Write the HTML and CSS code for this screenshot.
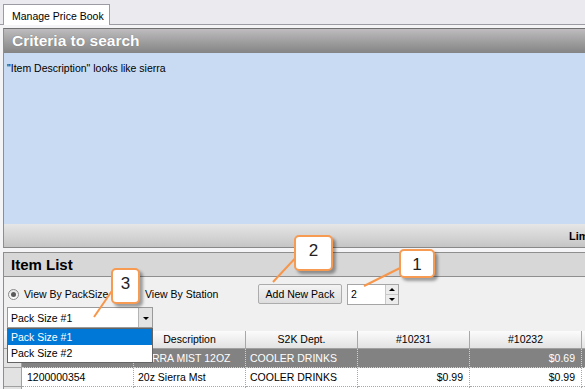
FILE: index.html
```html
<!DOCTYPE html>
<html lang="en">
    <head>
        <meta charset="UTF-8">
        <title>Manage Price Book</title>
        <link rel="stylesheet" href="styles.css">
    </head>
    <body>
        <div class="tabs">
            <div class="tab">Manage Price Book</div>
        </div>
        <div class="page">
            <div class="criteria">
                <div class="criteria_head">Criteria to search</div>
                <div class="criteria_body">"Item Description" looks like sierra</div>
                <div class="criteria_foot">Lim</div>
            </div>

            <div class="items">
                <div class="items_head">Item List</div>
                <div class="items_body">
                    <div class="options">
                        <label class="radio r1"><span class="dot on"></span>View By PackSize</label>
                        <label class="radio r2"><span class="dot"></span>View By Station</label>
                        <button class="btn_add">Add New Pack</button>
                        <div class="spin">
                            <span class="spin_val">2</span>
                            <div class="spin_btns">
                                <span class="spin_up"></span>
                                <span class="spin_down"></span>
                            </div>
                        </div>
                    </div>

                    <div class="combo">
                        <span class="combo_val">Pack Size #1</span>
                        <span class="combo_btn"><i class="arrow"></i></span>
                    </div>

                    <div class="grid">
                        <div class="hd rh"></div>
                        <div class="hd"></div>
                        <div class="hd">Description</div>
                        <div class="hd">S2K Dept.</div>
                        <div class="hd">#10231</div>
                        <div class="hd">#10232</div>
                        <div class="hd last"></div>

                        <div class="rh"></div>
                        <div class="cell dark"></div>
                        <div class="cell dark desc">SIERRA MIST 12OZ</div>
                        <div class="cell dark">COOLER DRINKS</div>
                        <div class="cell dark num"></div>
                        <div class="cell dark num">$0.69</div>
                        <div class="cell dark last"></div>

                        <div class="rh"></div>
                        <div class="cell upc">1200000354</div>
                        <div class="cell">20z Sierra Mst</div>
                        <div class="cell">COOLER DRINKS</div>
                        <div class="cell num">$0.99</div>
                        <div class="cell num">$0.99</div>
                        <div class="cell last"></div>

                        <div class="rh"></div>
                        <div class="cell"></div>
                        <div class="cell"></div>
                        <div class="cell"></div>
                        <div class="cell"></div>
                        <div class="cell"></div>
                        <div class="cell last"></div>
                    </div>
                </div>
            </div>
        </div>

        <!-- open dropdown list -->
        <div class="popup">
            <div class="popup_item selected">Pack Size #1</div>
            <div class="popup_item">Pack Size #2</div>
        </div>

        <!-- numbered callouts -->
        <svg class="lines" width="585" height="389" viewBox="0 0 585 389">
            <line x1="116" y1="285" x2="94" y2="317"></line>
            <line x1="300" y1="253" x2="273" y2="282"></line>
            <line x1="404" y1="266" x2="364" y2="286"></line>
        </svg>
        <div class="callout c3">3</div>
        <div class="callout c2">2</div>
        <div class="callout c1">1</div>
    </body>
</html>
```

FILE: styles.css
```css
* {
    margin: 0;
    padding: 0;
    box-sizing: border-box;
}

body {
    width: 585px;
    height: 389px;
    overflow: hidden;
    position: relative;
    background-color: #EBEBEF;
    font-family: "Liberation Sans", Arial, sans-serif;
    font-size: 10.5px;
    color: #000;
}

.tabs {
    height: 25px;
    padding: 4px 0 0 3px;
    border-bottom: 1px solid #9B9BA3;
}

.tab {
    width: 107px;
    height: 21px;
    background-color: white;
    border: 1px solid #9B9BA3;
    border-bottom: none;
    padding: 5px 0 0 8px;
    white-space: nowrap;
}

.page {
    background-color: #F4F4F6;
    padding-top: 3px;
    height: 364px;
}

.criteria {
    margin-left: 3px;
    border-left: 1px solid #8E8E8E;
    border-top: 1px solid #707070;
    border-bottom: 1px solid #888888;
}

.criteria_head {
    height: 24px;
    background: linear-gradient(#BEBCBE, #848484);
    color: white;
    font-weight: bold;
    font-size: 15.5px;
    padding: 3px 0 0 8px;
    text-shadow: 0 0 1px #6A6A70;
}

.criteria_body {
    height: 171px;
    background-color: #C9DBF2;
    padding: 9px 0 0 3px;
}

.criteria_foot {
    height: 23px;
    background: linear-gradient(#E6E6E6, #C5C5C5);
    font-weight: bold;
    font-size: 11px;
    padding: 6px 0 0 565px;
    white-space: nowrap;
    overflow: hidden;
}

.items {
    margin: 4px 0 0 3px;
    border-top: 1px solid #8E8E8E;
    border-left: 1px solid #8E8E8E;
}

.items_head {
    height: 24px;
    background-color: #D7D7D7;
    border-bottom: 1px solid #8E8E8E;
    font-weight: bold;
    font-size: 15px;
    padding: 3px 0 0 7px;
}

.items_body {
    background-color: #F0F0F0;
    height: 120px;
    padding-top: 7px;
}

.options {
    display: flex;
    align-items: center;
    height: 20px;
    padding-left: 4px;
}

.radio {
    display: flex;
    align-items: center;
    gap: 5px;
    white-space: nowrap;
}

.r1 {
    width: 121px;
}

.r2 {
    width: 129px;
}

.dot {
    width: 11px;
    height: 11px;
    border: 1px solid #8A8A8A;
    border-radius: 50%;
    background: linear-gradient(#E4E4E4, #FFFFFF);
    display: flex;
    align-items: center;
    justify-content: center;
}

.dot.on::after {
    content: "";
    width: 5px;
    height: 5px;
    border-radius: 50%;
    background-color: #5A5A5A;
}

.btn_add {
    width: 84px;
    height: 20px;
    font-family: inherit;
    font-size: 10.5px;
    background: linear-gradient(#F4F4F4, #DDDDDD);
    border: 1px solid #ACACAC;
    border-radius: 2px;
    margin-right: 5px;
}

.spin {
    display: flex;
    width: 52px;
    height: 21px;
    background-color: white;
    border: 1px solid #A5A5A5;
}

.spin_val {
    flex: 1;
    padding: 3px 0 0 3px;
}

.spin_btns {
    width: 13px;
    display: flex;
    flex-direction: column;
    border-left: 1px solid #C8C8C8;
}

.spin_up, .spin_down {
    flex: 1;
    background-color: #ECECEC;
    display: flex;
    align-items: center;
    justify-content: center;
}

.spin_up {
    border-bottom: 1px solid #C8C8C8;
}

.spin_up::after {
    content: "";
    border: 3px solid transparent;
    border-bottom: 3px solid #000;
    border-top: none;
}

.spin_down::after {
    content: "";
    border: 3px solid transparent;
    border-top: 3px solid #000;
    border-bottom: none;
}

.combo {
    display: flex;
    width: 146px;
    height: 21px;
    margin: 3px 0 0 3px;
    background-color: white;
    border: 1px solid #9A9A9A;
}

.combo_val {
    flex: 1;
    padding: 4px 0 0 3px;
}

.combo_btn {
    width: 14px;
    background-color: #E3E3E3;
    border-left: 1px solid #B4B4B4;
    display: flex;
    align-items: center;
    justify-content: center;
}

.arrow {
    border: 3px solid transparent;
    border-top: 3px solid #000;
    border-bottom: none;
    margin-top: 1px;
}

.grid {
    display: grid;
    grid-template-columns: 18px repeat(5, 112px) 1fr;
    grid-auto-rows: 18px 19px 19px 19px;
    margin-top: 3px;
    white-space: nowrap;
}

.hd {
    background: linear-gradient(#FCFCFC, #E2E2E2);
    border-right: 1px solid #A8A8A8;
    border-bottom: 1px solid #A0A0A0;
    text-align: center;
    line-height: 17px;
}

.hd.last {
    border-right: none;
}

.rh {
    background-color: #E2E2E2;
    border-right: 1px solid #A0A0A0;
    border-bottom: 1px solid #A0A0A0;
}

.cell {
    background-color: white;
    border-right: 1px dotted #A8A8A8;
    border-bottom: 1px dotted #A8A8A8;
    padding: 0 5px 0 4px;
    line-height: 18px;
    overflow: hidden;
}

.cell.dark {
    background-color: #828282;
    color: white;
    border-color: #D0D0D0;
}

.cell.desc {
    padding-left: 1px;
}

.cell.upc {
    padding-left: 5px;
}

.num {
    text-align: right;
    padding-right: 6px;
}

.last {
    border-right: none;
}

.popup {
    position: absolute;
    left: 7px;
    top: 328px;
    width: 146px;
    height: 35px;
    background-color: white;
    border: 1px solid #646464;
}

.popup_item {
    height: 16px;
    line-height: 16px;
    padding-left: 3px;
}

.popup_item.selected {
    background-color: #0078D7;
    color: white;
}

.lines {
    position: absolute;
    left: 0;
    top: 0;
}

.lines line {
    stroke: #F7964A;
    stroke-width: 2;
}

.callout {
    position: absolute;
    background-color: white;
    border: 2px solid #F79A52;
    border-radius: 5px;
    box-shadow: 3px 3px 3px rgba(0, 0, 0, 0.35);
    font-size: 17px;
    text-align: center;
    padding-top: 4px;
    color: #222;
}

.c3 {
    left: 111px;
    top: 268px;
    width: 29px;
    height: 36px;
}

.c2 {
    left: 294px;
    top: 235px;
    width: 39px;
    height: 36px;
}

.c1 {
    left: 399px;
    top: 249px;
    width: 36px;
    height: 29px;
}
```
